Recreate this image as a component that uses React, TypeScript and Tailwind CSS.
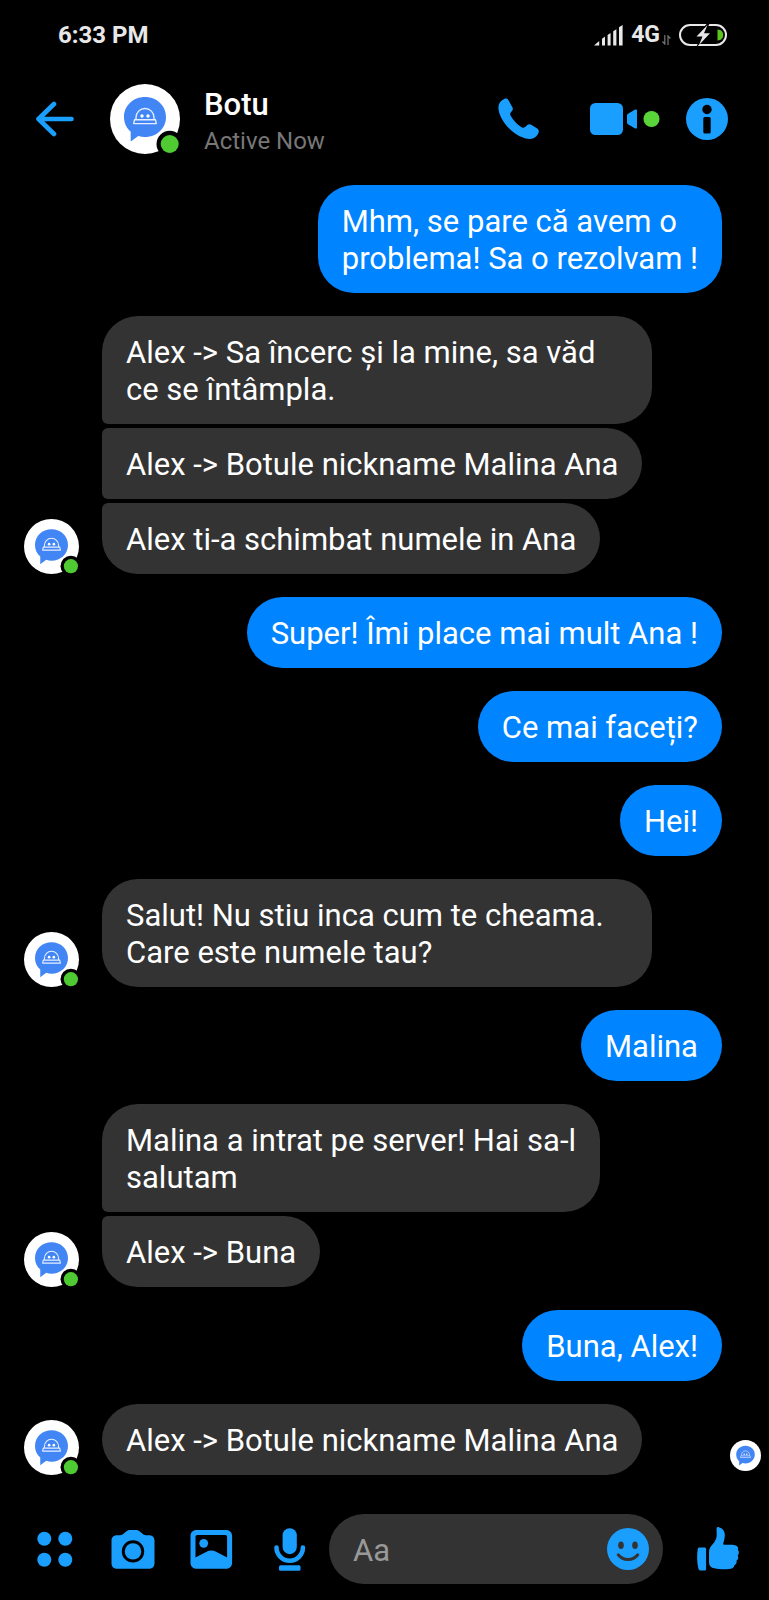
import React from "react";

type Group = { from: "me" | "bot"; messages: string[]; seen?: boolean };

const thread: Group[] = [
  { from: "me", messages: ["Mhm, se pare că avem o\nproblema! Sa o rezolvam !"] },
  {
    from: "bot",
    messages: [
      "Alex -> Sa încerc și la mine, sa văd ce se întâmpla.",
      "Alex -> Botule nickname Malina Ana",
      "Alex ti-a schimbat numele in Ana",
    ],
  },
  { from: "me", messages: ["Super! Îmi place mai mult Ana !"] },
  { from: "me", messages: ["Ce mai faceți?"] },
  { from: "me", messages: ["Hei!"] },
  { from: "bot", messages: ["Salut! Nu stiu inca cum te cheama. Care este numele tau?"] },
  { from: "me", messages: ["Malina"] },
  { from: "bot", messages: ["Malina a intrat pe server! Hai sa-l\nsalutam", "Alex -> Buna"] },
  { from: "me", messages: ["Buna, Alex!"] },
  { from: "bot", messages: ["Alex -> Botule nickname Malina Ana"], seen: true },
];

function Avatar({ className, online = true }: { className: string; online?: boolean }) {
  return (
    <svg viewBox="0 0 70 70" className={`block shrink-0 overflow-visible ${className}`} aria-hidden="true">
      <circle cx="35" cy="35" r="35" fill="#fff" />
      <path
        d="M35 13c11.8 0 21 8.6 21 20s-9.2 20-21 20c-2.400 0-4.600-.4-6.700-1.100L20.700 57.500V47.800C16.500 44.200 14 39 14 33c0-11.400 9.200-20 21-20z"
        fill="#4285f4"
      />
      <g fill="none" stroke="#e6efff" strokeWidth="1.400" strokeLinejoin="round">
        <path d="M26 35.500v-2c0-5 4-9 9-9s9 4 9 9v2" />
        <path d="M24.500 35.800h21l.800 3.800H23.700z" />
      </g>
      <circle cx="32" cy="32" r="1.700" fill="#fff" />
      <circle cx="38" cy="32" r="1.700" fill="#fff" />
      {online && (
        <>
          <circle cx="59.700" cy="60" r="13.200" fill="#000" />
          <circle cx="59.700" cy="60" r="9" fill="#4fca33" />
        </>
      )}
    </svg>
  );
}

function StatusBar() {
  return (
    <div className="flex h-[68px] items-center justify-between pl-[58px] pr-[42px] pt-0.5 text-[#e8e8e8]">
      <span className="text-[24px] font-bold leading-7">6:33 PM</span>
      <div className="flex items-center">
        <svg viewBox="0 0 29 21" className="h-[21px] w-[29px]" fill="currentColor" aria-label="Signal">
          <path d="M0 20.500 5.200 16v4.500zM8 13.800l3-2.300v9H8zM13.600 10l3-2v12.500h-3zM19.200 6.200l3.200-2v16.300h-3.200zM25 2.200 28.600 0v20.500H25z" />
        </svg>
        <span className="ml-2 text-[23px] font-bold leading-7">4G</span>
        <svg viewBox="0 0 9 10" className="ml-0.5 mt-2.5 h-2.5 w-[9px]" fill="none" stroke="#777" strokeWidth="1.200" aria-hidden="true">
          <path d="M2.800 0v9L.5 6.500M6 10V1l2.400 2.500" />
        </svg>
        <svg viewBox="0 0 48 22" className="ml-2 h-[22px] w-12" aria-label="Battery charging">
          <rect x="1" y="1" width="46" height="20" rx="10" fill="none" stroke="#e8e8e8" strokeWidth="2" />
          <path d="M38.500 5.500c4 0 5.700 2.800 5.700 5.500s-1.700 5.500-5.700 5.500z" fill="#5ac51c" />
          <path d="M28.500-1 16 13h6l-5 10.500 14.500-14h-6.500L31-1z" fill="#000" />
          <path d="M28.500 1 17.500 12.500h6L20 21 31 9.300h-6z" fill="#e8e8e8" />
        </svg>
      </div>
    </div>
  );
}

function Header() {
  return (
    <header className="flex h-[102px] items-center pl-9 pr-[41px] text-[#1a9fff]">
      <button type="button" aria-label="Back" className="shrink-0">
        <svg viewBox="0 0 38 36" className="block h-9 w-[38px]" fill="none" stroke="currentColor" strokeWidth="4.600" strokeLinecap="round" strokeLinejoin="round">
          <path d="M35.500 18H3M18 3 2.500 18 18 33" />
        </svg>
      </button>
      <Avatar className="ml-9 size-[70px]" />
      <div className="ml-6 min-w-0 flex-1 pt-[7px]">
        <h1 className="text-[31px] font-medium leading-9 text-white">Botu</h1>
        <p className="text-[24px] leading-9 text-[#777]">Active Now</p>
      </div>
      <button type="button" aria-label="Call" className="shrink-0">
        <svg viewBox="0 0 41 42" className="block h-[42px] w-[41px]" fill="currentColor">
          <path d="M6.300.9C3 2.200.6 5 .4 9 .2 15.500 5 24.300 11.500 30.800 18 37.200 26 41.200 32 41c4.300-.2 7.400-3 8.600-6.500.5-1.700 0-3-1.400-3.900l-5.600-3.600c-1.500-1-3.200-.9-4.500.2l-2 1.700c-1.200 1-2.600 1-3.900.2-2.300-1.500-4.200-3.200-6-5.200-1.900-2-3.500-4.200-4.700-6.500-.6-1.200-.4-2.400.6-3.400l.7-.7c1.300-1.300 1.400-2.600.4-4.200L10.400 2C9.400.6 8 .3 6.300.9z" />
        </svg>
      </button>
      <button type="button" aria-label="Video call" className="ml-[51px] shrink-0">
        <svg viewBox="0 0 70 32" className="block h-8 w-[70px]" fill="currentColor">
          <rect width="33" height="32" rx="5.500" />
          <path d="M37 12.800c0-1.100.4-1.700 1.400-2.300l6.300-3.700c1.300-.7 2.300-.3 2.300 1v16.400c0 1.300-1 1.700-2.300 1l-6.300-3.700c-1-.6-1.400-1.200-1.400-2.300z" />
          <circle cx="61.500" cy="16" r="8" fill="#5ad539" />
        </svg>
      </button>
      <button type="button" aria-label="Conversation information" className="ml-[26px] shrink-0">
        <svg viewBox="0 0 42 42" className="block size-[42px]">
          <circle cx="21" cy="21" r="21" fill="currentColor" />
          <circle cx="21" cy="11.500" r="4.700" fill="#000" />
          <rect x="17.300" y="19" width="7.400" height="16.500" rx="1.600" fill="#000" />
        </svg>
      </button>
    </header>
  );
}

function Bubble({ text, mine, first, last }: { text: string; mine: boolean; first: boolean; last: boolean }) {
  const corners = mine
    ? "rounded-[36px] bg-[#0084ff]"
    : `rounded-r-[36px] bg-[#333] ${first ? "rounded-tl-[36px]" : "rounded-tl-md"} ${last ? "rounded-bl-[36px]" : "rounded-bl-md"}`;
  return (
    <p className={`w-fit max-w-[550px] whitespace-pre-line px-6 pb-4 pt-[18px] text-[31px] leading-[37px] text-white ${corners}`}>
      {text}
    </p>
  );
}

function MessageGroup({ group }: { group: Group }) {
  const mine = group.from === "me";
  return (
    <li className={`flex items-end ${mine ? "justify-end pr-[47px]" : "pl-6 pr-2"}`}>
      {!mine && <Avatar className="mr-[23px] size-[55px]" />}
      <div className="flex min-w-0 flex-col gap-1">
        {group.messages.map((text, i) => (
          <Bubble key={text} text={text} mine={mine} first={i === 0} last={i === group.messages.length - 1} />
        ))}
      </div>
      {group.seen && <Avatar online={false} className="mb-1 ml-auto size-[31px]" />}
    </li>
  );
}

function IconButton({ label, children }: { label: string; children: React.ReactNode }) {
  return (
    <button type="button" aria-label={label} className="shrink-0">
      <svg viewBox="0 0 44 44" className="block size-11" fill="currentColor">
        {children}
      </svg>
    </button>
  );
}

function Composer() {
  return (
    <footer className="flex items-center pb-4 pl-[33px] pr-[29px] pt-[39px] text-[#1a9fff]">
      <div className="flex gap-[34px]">
        <IconButton label="More">
          <circle cx="11.300" cy="11.800" r="7" />
          <circle cx="32.300" cy="11.800" r="7" />
          <circle cx="11.300" cy="32.800" r="7" />
          <circle cx="32.300" cy="32.800" r="7" />
        </IconButton>
        <IconButton label="Camera">
          <path
            fillRule="evenodd"
            d="M15.500 4.300c1.200-.9 2.300-1.300 3.700-1.300h5.600c1.400 0 2.500.4 3.700 1.300l4 3.200c.8.600 1.500.8 2.500.8h3c3.400 0 5.500 2.100 5.500 5.500v22.400c0 3.400-2.100 5.500-5.500 5.500H6C2.600 41.700.5 39.600.5 36.200V13.800c0-3.400 2.100-5.500 5.500-5.500h3c1 0 1.700-.2 2.500-.8zM22 13.200a11.200 11.200 0 1 0 0 22.400 11.200 11.200 0 0 0 0-22.400z"
          />
          <circle cx="22" cy="24.400" r="8.200" />
        </IconButton>
        <IconButton label="Gallery">
          <path
            fillRule="evenodd"
            d="M7.500 3h29.600c3.600 0 6 2.400 6 6v26.700c0 3.600-2.400 6-6 6H7.500c-3.600 0-6-2.400-6-6V9c0-3.600 2.400-6 6-6zm.9 5c-1.200 0-1.900.7-1.900 1.900v20.600l11-5.800c3.300-1.700 6.300-1.700 9.600 0l11 5.800V9.900c0-1.200-.7-1.900-1.900-1.900z"
          />
          <circle cx="14.700" cy="16.300" r="4.400" />
        </IconButton>
        <IconButton label="Voice message">
          <rect x="15.600" y="1.200" width="14.200" height="26" rx="7.100" />
          <path d="M9.500 20.500a13.200 13.200 0 0 0 26.400 0" fill="none" stroke="currentColor" strokeWidth="4.600" strokeLinecap="round" />
          <rect x="12" y="38.200" width="21.500" height="5.600" rx="1.500" />
        </IconButton>
      </div>
      <div className="ml-[18px] flex h-[70px] min-w-0 flex-1 items-center rounded-full bg-[#333] pl-6 pr-3.5">
        <input
          type="text"
          aria-label="Message"
          placeholder="Aa"
          className="min-w-0 flex-1 bg-transparent pt-0.5 text-[31px] leading-[37px] text-white outline-none placeholder:text-[#999]"
        />
        <button type="button" aria-label="Emoji" className="shrink-0">
          <svg viewBox="0 0 42 42" className="block size-[42px]">
            <circle cx="21" cy="21" r="21" fill="currentColor" />
            <ellipse cx="14" cy="17.300" rx="2.800" ry="3.800" fill="#333" />
            <ellipse cx="28" cy="17.300" rx="2.800" ry="3.800" fill="#333" />
            <path d="M11.200 26.800c5 6.300 14.600 6.300 19.600 0" fill="none" stroke="#333" strokeWidth="3" strokeLinecap="round" />
          </svg>
        </button>
      </div>
      <div className="ml-[33px] flex">
        <IconButton label="Like">
          <path d="M3.500 20.500h5c1 0 1.600.6 1.600 1.600v19.800c0 1-.6 1.600-1.600 1.600H5c-1.500 0-2.300-.7-2.700-2.300C1 36 .8 28 1.700 22.300c.2-1.200.8-1.800 1.800-1.800z" />
          <path d="M20.600 1.200c.2-1 1-1.300 2.200-1 3.700.9 6 3.600 6 7.700 0 3-.7 5.600-1.500 8.400-.3 1 .2 1.500 1.200 1.500 4 0 8-.2 11.200.6 2.300.6 3 2.600 2.100 4.700 1.500 1.300 1.500 3.600-.1 5.300 1 2 .5 4-1.200 5.200.5 2-.3 3.700-2.100 4.600-.5 2.600-2.300 3.600-5.500 3.800-5.200.4-10.500.1-14.600-.8-3.800-.8-5.300-2.800-5.300-6.500v-9c0-3.200.7-5.200 2.800-7.500 3.800-4.200 5-6.800 4.900-11.500 0-2-.3-4 -.1-5.500z" />
        </IconButton>
      </div>
    </footer>
  );
}

export default function App() {
  return (
    <div className="flex min-h-screen flex-col bg-black font-['Roboto',sans-serif]">
      <StatusBar />
      <Header />
      <main className="flex-1 pt-[15px]">
        <ul className="flex flex-col gap-[23px]">
          {thread.map((group, i) => (
            <MessageGroup key={i} group={group} />
          ))}
        </ul>
      </main>
      <Composer />
    </div>
  );
}
